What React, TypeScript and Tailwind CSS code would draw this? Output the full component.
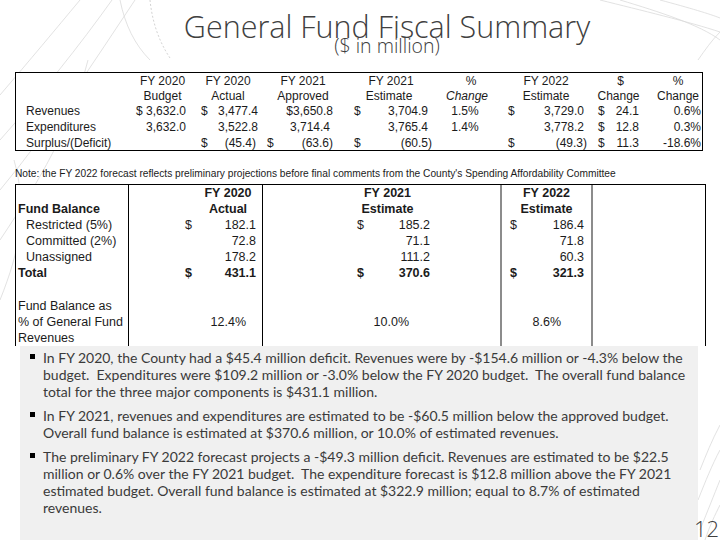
import React from "react";

const arial = { fontFamily: '"Liberation Sans", Arial, sans-serif' };

function M({ d, v, className = "" }: { d?: boolean; v: string; className?: string }) {
  return (
    <div className={`flex items-center ${d ? "justify-between" : "justify-end"} ${className}`}>
      {d && <span>$</span>}
      <span>{v}</span>
    </div>
  );
}

function Decor() {
  return (
    <svg className="pointer-events-none absolute inset-0" width="720" height="540" viewBox="0 0 720 540" fill="none">
      <g stroke="#dadada" strokeWidth="0.8">
        <path d="M0 95 C30 60 55 30 80 0" />
        <path d="M0 140 C40 95 80 45 112 0" />
        <path d="M0 190 C50 130 95 60 135 0" />
        <path d="M0 240 C40 180 70 130 88 60" />
        <path d="M0 300 C20 250 28 210 14 160" />
        <path d="M150 0 C152 20 158 40 170 58" strokeDasharray="2 2" stroke="#c8c8c8" />
        <path d="M120 0 C125 25 135 45 150 60" />
        <path d="M600 0 C640 10 690 22 720 32" />
        <path d="M620 0 C660 12 700 25 720 40" />
        <path d="M660 0 C690 8 710 14 720 18" />
        <path d="M698 60 C705 50 712 40 720 32" />
        <path d="M700 470 C706 455 712 440 720 425" />
        <path d="M698 500 C706 480 712 465 720 450" />
        <path d="M700 530 C708 510 714 495 720 480" />
        <path d="M705 540 C710 525 715 515 720 505" />
      </g>
    </svg>
  );
}

function Table1() {
  const cols = "grid grid-cols-[116px_61px_70px_80px_92px_64px_94px_51px_58px]";
  return (
    <div className="ml-[15px] w-[688px] border border-black bg-white text-[12px] text-[#1b1b1b]" style={arial}>
      <div className={`${cols} h-[15px] items-center leading-none`}>
        <div />
        <div className="text-center">FY 2020</div>
        <div className="text-center">FY 2020</div>
        <div className="text-center">FY 2021</div>
        <div className="pl-[4px] text-center">FY 2021</div>
        <div className="pl-[8px] text-center">%</div>
        <div className="text-center">FY 2022</div>
        <div className="pl-[4px] text-center">$</div>
        <div className="pl-[10px] text-center">%</div>
      </div>
      <div className={`${cols} h-[15px] items-center leading-none`}>
        <div />
        <div className="text-center">Budget</div>
        <div className="text-center">Actual</div>
        <div className="text-center">Approved</div>
        <div className="text-center">Estimate</div>
        <div className="text-center italic">Change</div>
        <div className="text-center">Estimate</div>
        <div className="text-center">Change</div>
        <div className="pl-[10px] text-center">Change</div>
      </div>
      <div className={`${cols} h-[16px] items-center leading-none`}>
        <div className="pl-[10px]">Revenues</div>
        <M v="$ 3,632.0" className="pr-[7px]" />
        <M d v="3,477.4" className="pl-[8px] pr-[5px]" />
        <M v="$3,650.8" className="pr-[10px]" />
        <M d v="3,704.9" className="pl-[11px] pr-[7px]" />
        <div className="pr-[4px] text-center">1.5%</div>
        <M d v="3,729.0" className="pl-[9px] pr-[9px]" />
        <M d v="24.1" className="pl-[5px] pr-[5px]" />
        <M v="0.6%" className="pr-[1px]" />
      </div>
      <div className={`${cols} h-[16px] items-center leading-none`}>
        <div className="pl-[10px]">Expenditures</div>
        <M v="3,632.0" className="pr-[7px]" />
        <M v="3,522.8" className="pl-[8px] pr-[5px]" />
        <M v="3,714.4" className="pr-[13px]" />
        <M v="3,765.4" className="pl-[11px] pr-[7px]" />
        <div className="pr-[4px] text-center">1.4%</div>
        <M v="3,778.2" className="pl-[9px] pr-[9px]" />
        <M d v="12.8" className="pl-[5px] pr-[5px]" />
        <M v="0.3%" className="pr-[1px]" />
      </div>
      <div className={`${cols} h-[15px] items-center leading-none`}>
        <div className="pl-[10px]">Surplus/(Deficit)</div>
        <div />
        <M d v="(45.4)" className="pl-[8px] pr-[7px]" />
        <M d v="(63.6)" className="pl-[4px] pr-[10px]" />
        <M d v="(60.5)" className="pl-[11px] pr-[3px]" />
        <div />
        <M d v="(49.3)" className="pl-[9px] pr-[6px]" />
        <M d v="11.3" className="pl-[5px] pr-[5px]" />
        <M v="-18.6%" className="pr-[1px]" />
      </div>
    </div>
  );
}

type Row2 = {
  label: React.ReactNode;
  lcls: string;
  b: React.ReactNode;
  c: React.ReactNode;
  d: React.ReactNode;
  h: string;
};

function Table2() {
  const rows: Row2[] = [
    {
      label: "",
      lcls: "",
      b: <div className="pl-[65px] text-center font-bold">FY 2020</div>,
      c: <div className="pl-[12px] text-center font-bold">FY 2021</div>,
      d: <div className="text-center font-bold">FY 2022</div>,
      h: "h-[16px]",
    },
    {
      label: "Fund Balance",
      lcls: "pl-[2px] font-bold",
      b: <div className="pl-[65px] text-center font-bold">Actual</div>,
      c: <div className="pl-[12px] text-center font-bold">Estimate</div>,
      d: <div className="text-center font-bold">Estimate</div>,
      h: "h-[16px]",
    },
    {
      label: "Restricted (5%)",
      lcls: "pl-[10px]",
      b: <M d v="182.1" className="pl-[56px] pr-[6px]" />,
      c: <M d v="185.2" className="pl-[94px] pr-[70px]" />,
      d: <M d v="186.4" className="pl-[8px] pr-[7px]" />,
      h: "h-[16px]",
    },
    {
      label: "Committed (2%)",
      lcls: "pl-[10px]",
      b: <M v="72.8" className="pr-[6px]" />,
      c: <M v="71.1" className="pr-[70px]" />,
      d: <M v="71.8" className="pr-[7px]" />,
      h: "h-[16px]",
    },
    {
      label: "Unassigned",
      lcls: "pl-[10px]",
      b: <M v="178.2" className="pr-[6px]" />,
      c: <M v="111.2" className="pr-[70px]" />,
      d: <M v="60.3" className="pr-[7px]" />,
      h: "h-[16px]",
    },
    {
      label: "Total",
      lcls: "pl-[2px] font-bold",
      b: <M d v="431.1" className="pl-[56px] pr-[6px] font-bold" />,
      c: <M d v="370.6" className="pl-[94px] pr-[70px] font-bold" />,
      d: <M d v="321.3" className="pl-[8px] pr-[7px] font-bold" />,
      h: "h-[16px]",
    },
    { label: "", lcls: "", b: null, c: null, d: null, h: "h-[17px]" },
    {
      label: (
        <>
          Fund Balance as
          <br />% of General Fund
          <br />
          Revenues
        </>
      ),
      lcls: "pl-[2px] leading-[16px]",
      b: <div className="pr-[16px] text-right">12.4%</div>,
      c: <div className="pr-[91px] text-right">10.0%</div>,
      d: <div className="pr-[30px] text-right">8.6%</div>,
      h: "h-[48px]",
    },
  ];
  return (
    <div
      className="ml-[15px] w-[691px] border-x border-t border-black bg-white text-[12.5px] leading-none text-[#1b1b1b]"
      style={arial}
    >
      {rows.map((r, i) => (
        <div key={i} className={`flex ${r.h}`}>
          <div className={`flex w-[113px] items-center border-r border-black ${r.lcls}`}>
            <div>{r.label}</div>
          </div>
          <div className="flex w-[134px] flex-col justify-center border-r border-black">{r.b}</div>
          <div className="flex w-[239px] flex-col justify-center border-r-2 border-[#8c8c8c]">{r.c}</div>
          <div className="flex w-[91px] flex-col justify-center border-r-2 border-[#8c8c8c]">{r.d}</div>
          <div className="w-[112px]" />
        </div>
      ))}
    </div>
  );
}

const bullets: string[][] = [
  [
    "In FY 2020, the County had a $45.4 million deficit. Revenues were by -$154.6 million or -4.3% below the",
    "budget.  Expenditures were $109.2 million or -3.0% below the FY 2020 budget.  The overall fund balance",
    "total for the three major components is $431.1 million.",
  ],
  [
    "In FY 2021, revenues and expenditures are estimated to be -$60.5 million below the approved budget.",
    "Overall fund balance is estimated at $370.6 million, or 10.0% of estimated revenues.",
  ],
  [
    "The preliminary FY 2022 forecast projects a -$49.3 million deficit. Revenues are estimated to be $22.5",
    "million or 0.6% over the FY 2021 budget.  The expenditure forecast is $12.8 million above the FY 2021",
    "estimated budget. Overall fund balance is estimated at $322.9 million; equal to 8.7% of estimated",
    "revenues.",
  ],
];

export default function App() {
  return (
    <div className="relative flex h-[540px] w-[720px] flex-col overflow-hidden bg-white">
      <Decor />
      <div
        className="relative flex h-[72px] flex-col items-center pl-[54px] text-[#404040]"
        style={{ fontFamily: '"Open Sans", sans-serif' }}
      >
        <div className="pt-[12px] text-[30.5px] font-light leading-[28px]">General Fund Fiscal Summary</div>
        <div className="mt-[-3px] text-[19.5px] font-light leading-[18px]">($ in million)</div>
      </div>

      <div className="relative">
        <Table1 />
      </div>

      <div
        className="relative mt-[17px] ml-[15px] whitespace-nowrap text-[10.2px] leading-[12px] text-[#1b1b1b]"
        style={arial}
      >
        Note: the FY 2022 forecast reflects preliminary projections before final comments from the County's Spending
        Affordability Committee
      </div>

      <div className="relative mt-[4px]">
        <Table2 />
      </div>

      <div
        className="relative ml-[20px] w-[678px] flex-1 bg-[#f0f0f0] pt-[3px] text-[14px] leading-[17px] text-[#3a3a3a]"
        style={{ fontFamily: "Lato, sans-serif" }}
      >
        {bullets.map((p, i) => (
          <div key={i} className={`flex ${i > 0 ? "mt-[7px]" : ""}`}>
            <span className="ml-[10px] mt-[5px] h-[5px] w-[5px] shrink-0 bg-black" />
            <div className="ml-[8px]">
              {p.map((l, j) => (
                <div key={j} className="whitespace-pre">
                  {l}
                </div>
              ))}
            </div>
          </div>
        ))}
      </div>

      <div
        className="absolute bottom-[0px] right-[1px] text-[22px] font-light leading-[24px] text-[#404040]"
        style={{ fontFamily: '"Open Sans", sans-serif' }}
      >
        12
      </div>
    </div>
  );
}
